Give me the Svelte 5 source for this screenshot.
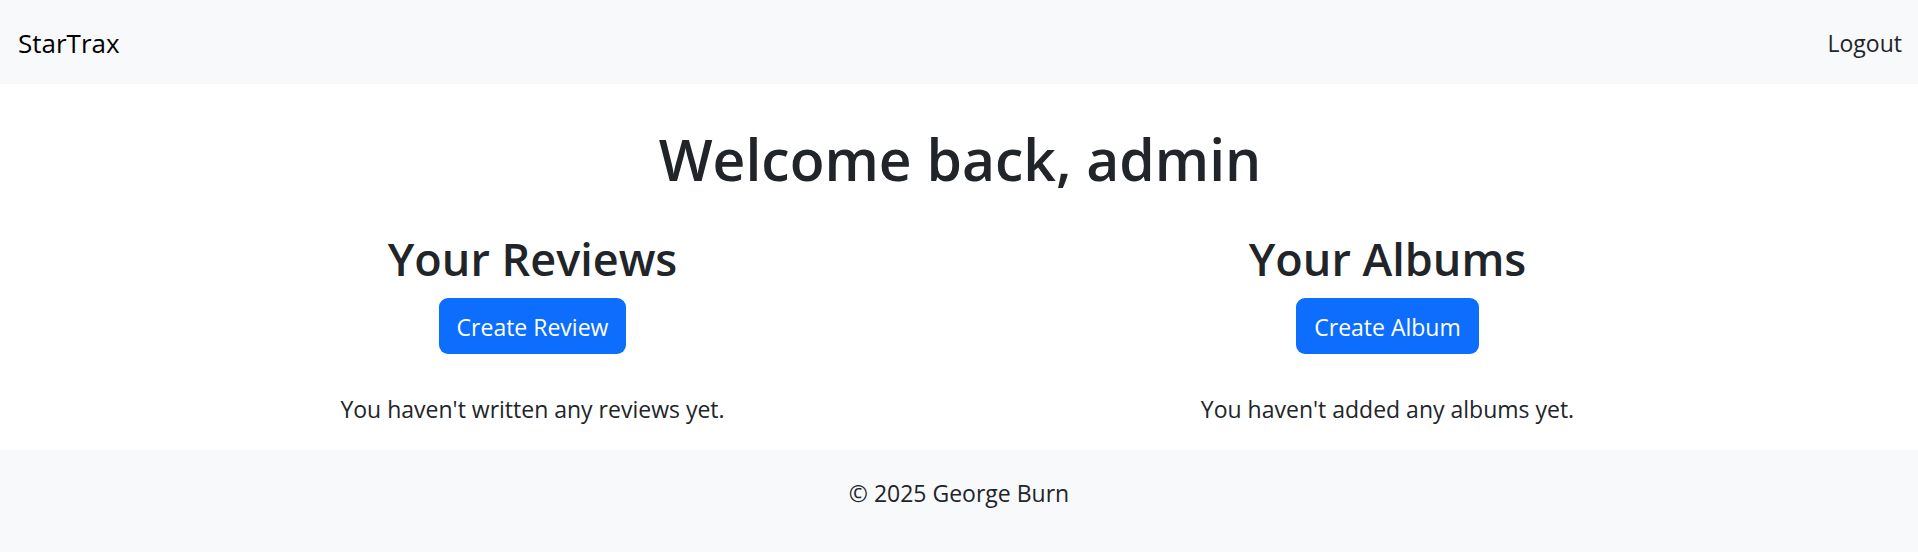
<script>
  const sections = [
    { title: 'Your Reviews', action: 'Create Review', empty: "You haven't written any reviews yet." },
    { title: 'Your Albums', action: 'Create Album', empty: "You haven't added any albums yet." }
  ];
</script>

<nav>
  <a class="brand" href="#home">StarTrax</a>
  <a class="logout" href="#logout">Logout</a>
</nav>

<main>
  <h1>Welcome back, admin</h1>
  <div class="row">
    {#each sections as s}
      <section>
        <h2>{s.title}</h2>
        <a class="btn" href="#create">{s.action}</a>
        <p>{s.empty}</p>
      </section>
    {/each}
  </div>
</main>

<footer>© 2025 George Burn</footer>

<style>
  :global(body) {
    margin: 0;
    background: #fff;
    color: #212529;
    font-family: "Open Sans", "Segoe UI", "Noto Sans", sans-serif;
    font-size: 23px;
    line-height: 36px;
  }
  a { text-decoration: none; }
  nav {
    display: flex;
    justify-content: space-between;
    align-items: center;
    padding: 21px 16px 19px 18px;
    background: #f8f9fa;
    line-height: 44px;
  }
  .brand { color: #000; font-size: 26px; }
  .logout { color: #212529; }
  main { padding: 39px 103px 0 105px; text-align: center; }
  h1 { margin: 0; font-size: 57px; line-height: 72px; font-weight: 600; }
  .row { display: grid; grid-template-columns: 1fr 1fr; margin-top: 34px; }
  h2 { margin: 0 0 9px; font-size: 45px; line-height: 60px; font-weight: 600; }
  .btn {
    display: inline-block;
    padding: 11px 18px 9px;
    border-radius: 9px;
    background: #0d6efd;
    color: #fff;
  }
  p { margin: 37px 0 23px; }
  footer { padding: 25px 16px 41px; background: #f8f9fa; text-align: center; }
</style>
